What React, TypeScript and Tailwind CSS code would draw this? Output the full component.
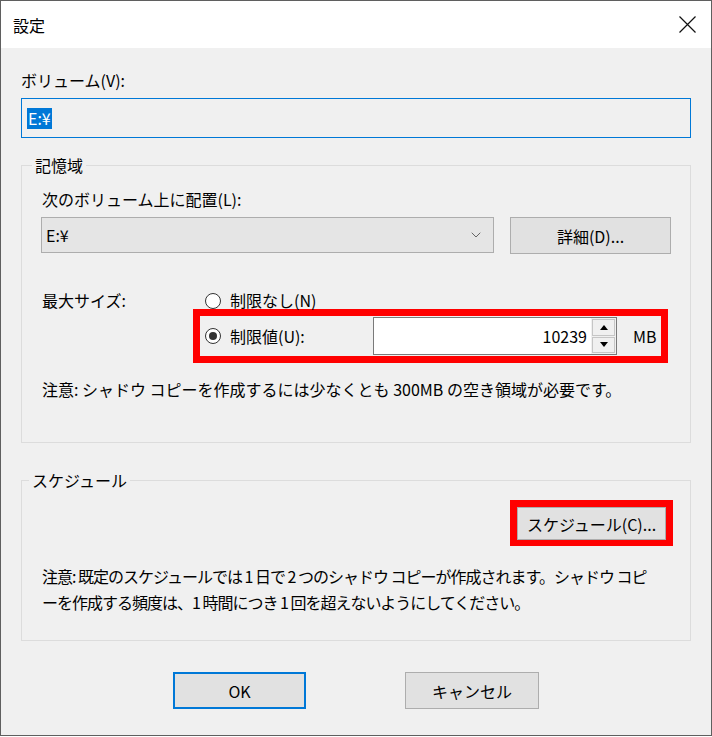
import { ChevronDown } from "lucide-react";

function Radio({ checked }: { checked?: boolean }) {
  return (
    <span className="flex h-[16px] w-[16px] shrink-0 items-center justify-center rounded-full border border-[#333] bg-white">
      {checked && <span className="h-[8px] w-[8px] rounded-full bg-[#333]" />}
    </span>
  );
}

function Spinner() {
  return (
    <div className="flex h-full w-[25px] flex-col gap-px bg-[#f0f0f0] p-px">
      <div className="flex flex-1 items-center justify-center border border-[#c6c6c6] bg-[#f0f0f0]">
        <svg width="8" height="5" viewBox="0 0 8 5">
          <path d="M0 5 L4 0 L8 5 Z" fill="#000" />
        </svg>
      </div>
      <div className="flex flex-1 items-center justify-center border border-[#c6c6c6] bg-[#f0f0f0]">
        <svg width="8" height="5" viewBox="0 0 8 5">
          <path d="M0 0 L4 5 L8 0 Z" fill="#000" />
        </svg>
      </div>
    </div>
  );
}

export default function App() {
  return (
    <div className="h-[737px] w-[712px] bg-white font-['Noto_Sans_CJK_JP','Noto_Sans',sans-serif] text-[16px] text-black">
      <div className="flex h-[736px] flex-col border border-[#5f5f5f] bg-[#f0f0f0]">
        {/* title bar */}
        <div className="flex h-[47px] shrink-0 items-center justify-between bg-white pl-[12px] pr-[15px]">
          <span className="leading-[22px]">設定</span>
          <svg width="17" height="17" viewBox="0 0 17 17">
            <path d="M0.5 0.5 L16.5 16.5 M16.5 0.5 L0.5 16.5" stroke="#111" strokeWidth="1.2" />
          </svg>
        </div>

        <div className="flex flex-col px-[20px]">
          <p className="mt-[21px] leading-[22px]">ボリューム(V):</p>
          <div className="mt-[7px] flex h-[40px] items-center border border-[#0078d7] pl-[5px]">
            <span className="bg-[#0078d7] px-px leading-[21px] text-white">E:¥</span>
          </div>

          {/* 記憶域 */}
          <fieldset className="mt-[16px] min-w-0 border border-[#dcdcdc] p-0">
            <legend className="ml-[10px] px-[3px] leading-[22px]">記憶域</legend>
            <div className="pb-[42px] pl-[20px] pr-[19px] pt-[12px]">
              <p className="leading-[22px]">次のボリューム上に配置(L):</p>
              <div className="mt-[7px] flex items-start justify-between">
                <div className="-ml-px flex h-[36px] w-[453px] items-center justify-between border border-[#adadad] bg-[#e5e5e5] pl-[4px] pr-[9px]">
                  <span className="leading-[22px]">E:¥</span>
                  <ChevronDown size={16} strokeWidth={1.2} color="#444" />
                </div>
                <button className="h-[37px] w-[161px] border border-[#adadad] bg-[#e1e1e1] leading-[22px]">
                  詳細(D)...
                </button>
              </div>

              <div className="mt-[38px] flex h-[17px] items-center">
                <span className="w-[163px] leading-[17px]">最大サイズ:</span>
                <Radio />
                <span className="ml-[9px] leading-[17px]">制限なし(N)</span>
              </div>

              <div className="ml-[151px] flex h-[54px] w-[475px] items-center border-[7px] border-[#ff0000] pl-[5px]">
                <div className="flex w-[168px] items-center">
                  <Radio checked />
                  <span className="ml-[9px] leading-[22px]">制限値(U):</span>
                </div>
                <div className="flex h-[38px] w-[244px] border border-[#7a7a7a] bg-white">
                  <div className="flex flex-1 items-center justify-end pr-[4px] leading-[22px]">10239</div>
                  <Spinner />
                </div>
                <span className="ml-[16px] leading-[22px]">MB</span>
              </div>

              <p className="mt-[15px] leading-[22px]">
                注意: シャドウ コピーを作成するには少なくとも 300MB の空き領域が必要です。
              </p>
            </div>
          </fieldset>

          {/* スケジュール */}
          <fieldset className="mt-[26px] min-w-0 border border-[#dcdcdc] p-0">
            <legend className="ml-[7px] px-[3px] leading-[22px]">スケジュール</legend>
            <div className="pb-[25px] pl-[20px] pr-[17px] pt-[9px]">
              <div className="flex justify-end">
                <div className="border-[7px] border-b-[6px] border-[#ff0000]">
                  <button className="h-[33px] w-[149px] border border-[#adadad] bg-[#e1e1e1] leading-[22px]">
                    スケジュール(C)...
                  </button>
                </div>
              </div>
              <p className="mt-[17px] whitespace-nowrap leading-[26px] tracking-[-1px]">
                注意: 既定のスケジュールでは 1 日で 2 つのシャドウ コピーが作成されます。シャドウ コピ
                <br />
                ーを作成する頻度は、1 時間につき 1 回を超えないようにしてください。
              </p>
            </div>
          </fieldset>

          <div className="mt-[31px] flex justify-center gap-[99px]">
            <button className="h-[37px] w-[133px] border-2 border-[#0078d7] bg-[#e1e1e1] leading-[22px]">OK</button>
            <button className="h-[37px] w-[134px] border border-[#adadad] bg-[#e1e1e1] leading-[22px]">キャンセル</button>
          </div>
        </div>
      </div>
    </div>
  );
}
